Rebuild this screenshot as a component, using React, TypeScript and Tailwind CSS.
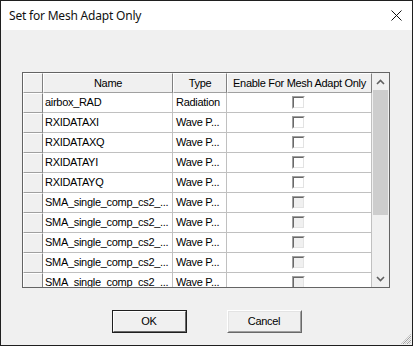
import React from "react";

const rows = [
  { name: "airbox_RAD", type: "Radiation", enabled: true },
  { name: "RXIDATAXI", type: "Wave P...", enabled: true },
  { name: "RXIDATAXQ", type: "Wave P...", enabled: true },
  { name: "RXIDATAYI", type: "Wave P...", enabled: true },
  { name: "RXIDATAYQ", type: "Wave P...", enabled: true },
  { name: "SMA_single_comp_cs2_...", type: "Wave P...", enabled: false },
  { name: "SMA_single_comp_cs2_...", type: "Wave P...", enabled: false },
  { name: "SMA_single_comp_cs2_...", type: "Wave P...", enabled: false },
  { name: "SMA_single_comp_cs2_...", type: "Wave P...", enabled: false },
  { name: "SMA_single_comp_cs2_...", type: "Wave P...", enabled: false },
];

function CheckBox({ enabled }: { enabled: boolean }) {
  return (
    <div className="w-[13px] h-[13px] border border-t-[#a0a0a0] border-l-[#a0a0a0] border-r-[#ffffff] border-b-[#ffffff]">
      <div
        className={
          "w-full h-full border border-t-[#696969] border-l-[#696969] border-r-[#e3e3e3] border-b-[#e3e3e3] " +
          (enabled ? "bg-white" : "bg-[#f0f0f0]")
        }
      />
    </div>
  );
}

function HeaderCell({ w, children }: { w: string; children?: React.ReactNode }) {
  return (
    <div className={`${w} h-full shrink-0 bg-[#f0f0f0] border border-t-white border-l-white border-r-[#808080] border-b-[#a0a0a0] flex items-center justify-center`}>
      {children}
    </div>
  );
}

export default function App() {
  return (
    <div className="w-[413px] h-[346px] border border-[#1f1f1f] flex flex-col bg-[#f0f0f0] font-['Liberation_Sans',Arial,sans-serif] text-[11px] tracking-[-0.3px] text-black overflow-hidden">
      {/* Title bar */}
      <div className="h-[29px] shrink-0 bg-white flex items-center justify-between pl-[8px] pr-[10px]">
        <span className="font-['Noto_Sans',sans-serif] text-[12px] tracking-[-0.2px] text-[#111]">Set for Mesh Adapt Only</span>
        <svg width="11" height="11" viewBox="0 0 11 11" className="mr-[0px]">
          <path d="M0.5 0.5 L10.5 10.5 M10.5 0.5 L0.5 10.5" stroke="#111" strokeWidth="1" fill="none" />
        </svg>
      </div>

      {/* Body */}
      <div className="relative flex-1 flex flex-col">
        <div className="mt-[42px] ml-[21px] w-[368px] h-[216px] border border-[#646464] flex bg-white">
          <div className="w-[349px] h-full overflow-hidden flex flex-col">
            <div className="h-[20px] shrink-0 flex">
              <HeaderCell w="w-[20px]" />
              <HeaderCell w="w-[130px]">Name</HeaderCell>
              <HeaderCell w="w-[54px]">Type</HeaderCell>
              <HeaderCell w="w-[145px]">Enable For Mesh Adapt Only</HeaderCell>
            </div>
            {rows.map((r, i) => (
              <div key={i} className="h-[20px] shrink-0 flex">
                <div className="w-[20px] h-full shrink-0 bg-[#f0f0f0] border border-t-white border-l-white border-r-[#808080] border-b-[#a0a0a0]" />
                <div className="w-[130px] h-full shrink-0 border-r border-b border-[#c0c0c0] flex items-center pl-[2px] whitespace-nowrap overflow-hidden">
                  {r.name}
                </div>
                <div className="w-[54px] h-full shrink-0 border-r border-b border-[#c0c0c0] flex items-center pl-[3px] whitespace-nowrap overflow-hidden">
                  {r.type}
                </div>
                <div className="w-[145px] h-full shrink-0 border-r border-b border-[#c0c0c0] flex items-center justify-center pr-[2px]">
                  <CheckBox enabled={r.enabled} />
                </div>
              </div>
            ))}
          </div>
          {/* Scrollbar */}
          <div className="w-[17px] h-full shrink-0 bg-[#f0f0f0] flex flex-col">
            <div className="h-[17px] shrink-0 flex items-center justify-center">
              <svg width="9" height="6" viewBox="0 0 9 6">
                <path d="M1 5 L4.5 1.5 L8 5" stroke="#606060" strokeWidth="1.6" fill="none" />
              </svg>
            </div>
            <div className="flex-1 flex flex-col items-center">
              <div className="w-[15px] h-[125px] bg-[#cdcdcd]" />
            </div>
            <div className="h-[17px] shrink-0 flex items-center justify-center">
              <svg width="9" height="6" viewBox="0 0 9 6">
                <path d="M1 1 L4.5 4.5 L8 1" stroke="#606060" strokeWidth="1.6" fill="none" />
              </svg>
            </div>
          </div>
        </div>

        {/* Buttons */}
        <div className="mt-[22px] flex justify-center gap-[40px]">
          <button className="w-[75px] h-[23px] border border-[#1f1f1f] bg-[#f0f0f0] p-0">
            <div className="w-full h-full border border-t-white border-l-white border-r-[#696969] border-b-[#696969] flex items-center justify-center">
              OK
            </div>
          </button>
          <button className="w-[75px] h-[23px] border border-t-white border-l-white border-r-[#696969] border-b-[#696969] bg-[#f0f0f0] p-0">
            <div className="w-full h-full border border-t-[#e3e3e3] border-l-[#e3e3e3] border-r-[#a0a0a0] border-b-[#a0a0a0] flex items-center justify-center">
              Cancel
            </div>
          </button>
        </div>

        {/* Resize grip */}
        <svg width="12" height="12" viewBox="0 0 12 12" className="absolute right-0 bottom-0">
          <path d="M11 3 L3 11 M11 7 L7 11 M11 11 L11 11" stroke="#a0a0a0" strokeWidth="1" fill="none" />
          <path d="M11 1 L1 11 M11 5 L5 11 M11 9 L9 11" stroke="#c8c8c8" strokeWidth="1" fill="none" />
        </svg>
      </div>
    </div>
  );
}
